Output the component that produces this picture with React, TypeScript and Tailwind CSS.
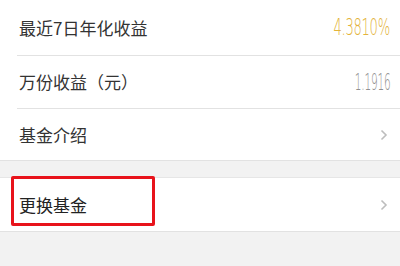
import React from "react";

const font = { fontFamily: '"Noto Sans CJK SC", "Noto Sans", sans-serif' };

function Chevron() {
  return (
    <svg width="8" height="12" viewBox="0 0 8 12" className="shrink-0">
      <path d="M1.5 1.5 L6 6 L1.5 10.5" fill="none" stroke="#bdbdbd" strokeWidth="1.6" />
    </svg>
  );
}

export default function App() {
  return (
    <div className="w-[400px] h-[266px] bg-[#f2f2f2] overflow-hidden" style={font}>
      <div className="bg-white">
        <div className="h-[55px] pl-[19px] pr-[10px] flex items-center justify-between text-[#333] text-[17px]">
          <span>最近7日年化收益</span>
          <span className="text-[#e3b33a] text-[23px] font-light tracking-[-0.5px] scale-x-[0.57] origin-right" style={{ fontFamily: '"DejaVu Sans", sans-serif' }}>4.3810%</span>
        </div>
        <div className="ml-[17px] h-px bg-[#e2e2e2]" />
        <div className="h-[52px] pl-[19px] pr-[10px] flex items-center justify-between text-[#333] text-[17px]">
          <span>万份收益（元）</span>
          <span className="text-[#8f8f8f] text-[23px] font-light tracking-[-0.5px] scale-x-[0.46] origin-right" style={{ fontFamily: '"DejaVu Sans", sans-serif' }}>1.1916</span>
        </div>
        <div className="ml-[17px] h-px bg-[#e2e2e2]" />
        <div className="h-[51px] pl-[19px] pr-[12px] flex items-center justify-between text-[#333] text-[17px]">
          <span>基金介绍</span>
          <Chevron />
        </div>
        <div className="h-px bg-[#e2e2e2]" />
      </div>
      <div className="h-[16px]" />
      <div className="h-px bg-[#e6e6e6]" />
      <div className="relative bg-white h-[53px] pl-[19px] pr-[12px] flex items-center justify-between text-[#222] text-[17px]">
        <span>更换基金</span>
        <Chevron />
        <div className="absolute left-[11px] top-[-2px] w-[144px] h-[50px] border-[3px] border-[#e8131b] rounded-[2px]" />
      </div>
      <div className="h-px bg-[#e2e2e2]" />
    </div>
  );
}
